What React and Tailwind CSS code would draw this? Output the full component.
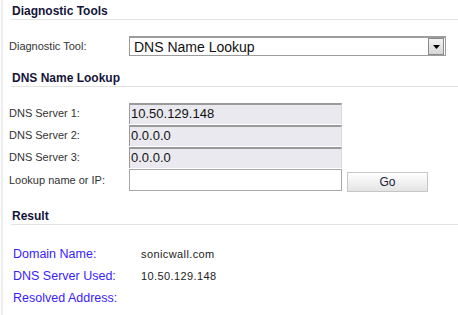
const font = { fontFamily: '"Liberation Sans", Arial, sans-serif' };

const SectionHeading = ({ title }) => (
  <div className="ml-[8px] h-[20px] border-b border-[#e2e2e2] pl-px pt-[4px] text-[12px] font-bold leading-[15px] text-[#15153a]">
    {title}
  </div>
);

const ServerRow = ({ label, value }) => (
  <div className="flex h-[22px] items-start">
    <div className="w-[120px] pt-[3px] text-[11px] leading-[14px] text-[#333]">{label}</div>
    <div className="h-[21px] w-[213px] border-t-2 border-l border-[#9a9a9a] border-r border-r-[#d8d8d8] bg-[#e9e9ef] pl-[1px] text-[13px] leading-[18px] text-[#111]">
      {value}
    </div>
  </div>
);

const ResultRow = ({ label, value }) => (
  <div className="flex h-[22px] items-center">
    <div className="w-[128px] text-[12.5px] text-[#3a1cff]">{label}</div>
    <div className="text-[11px] tracking-[0.4px] text-[#222]">{value}</div>
  </div>
);

export default function App() {
  return (
    <div className="h-[315px] w-[458px] overflow-hidden bg-white" style={font}>
      <div className="ml-px h-full border-l-2 border-[#eeeeee]">
        <SectionHeading title="Diagnostic Tools" />

        <div className="mt-[16px] ml-[6px] flex h-[20px] items-center">
          <div className="w-[120px] text-[11px] text-[#333]">Diagnostic Tool:</div>
          <div className="flex h-[20px] w-[317px] items-center justify-between border border-t-2 border-[#9c9c9c] bg-white pl-[4px] pr-px">
            <span className="text-[14px] leading-[16px] text-[#111]">DNS Name Lookup</span>
            <div className="flex h-[17px] w-[16px] items-center justify-center border border-[#8a8a8a] bg-gradient-to-b from-[#f4f4f4] to-[#d6d6d6]">
              <svg width="7" height="4" viewBox="0 0 7 4">
                <polygon points="0,0 7,0 3.5,4" fill="#000" />
              </svg>
            </div>
          </div>
        </div>

        <div className="mt-[11px]">
          <SectionHeading title="DNS Name Lookup" />
        </div>

        <div className="mt-[16px] ml-[6px]">
          <ServerRow label="DNS Server 1:" value="10.50.129.148" />
          <ServerRow label="DNS Server 2:" value="0.0.0.0" />
          <ServerRow label="DNS Server 3:" value="0.0.0.0" />
          <div className="flex h-[24px] items-start">
            <div className="w-[120px] pt-[4px] text-[11px] leading-[14px] text-[#333]">Lookup name or IP:</div>
            <div className="h-[22px] w-[213px] border border-[#a8a8a8] bg-white" />
            <button className="mt-[3px] ml-[5px] h-[20px] w-[81px] border border-[#c6c6c6] bg-gradient-to-b from-[#ffffff] to-[#e4e4e4] text-[12px] text-[#1a1a3a]">
              Go
            </button>
          </div>
        </div>

        <div className="mt-[12px]">
          <SectionHeading title="Result" />
        </div>

        <div className="mt-[18px] ml-[10px]">
          <ResultRow label="Domain Name:" value="sonicwall.com" />
          <ResultRow label="DNS Server Used:" value="10.50.129.148" />
          <ResultRow label="Resolved Address:" value="" />
        </div>
      </div>
    </div>
  );
}
